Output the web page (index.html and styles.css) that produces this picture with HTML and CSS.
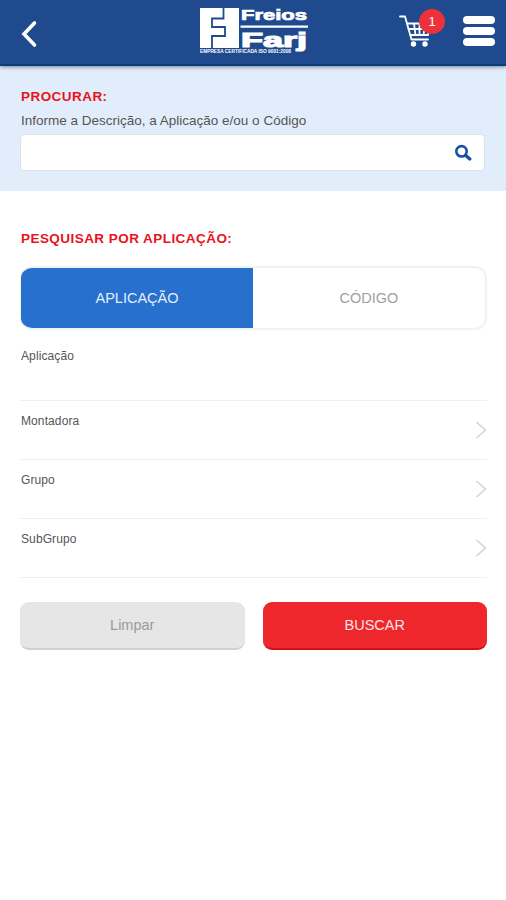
FILE: index.html
```html
<!DOCTYPE html>
<html lang="pt-BR">

<head>
    <meta charset="UTF-8">
    <meta name="viewport" content="width=device-width, initial-scale=1.0">
    <title>Freios Farj</title>
    <link rel="stylesheet" href="styles.css">
</head>

<body>
    <header class="topbar">
        <button class="icon-button back" aria-label="Voltar">
            <svg width="18" height="28" viewBox="0 0 18 28">
                <path d="M14.500 3 4 14l10.500 11" fill="none" stroke="#fff" stroke-width="3.600" stroke-linecap="round" />
            </svg>
        </button>

        <svg class="logo" width="112" height="50" viewBox="0 0 112 50">
            <path d="M2 3h39v40H2z" fill="#fff" />
            <path d="M25.500 3v10.500H14v8.500h13v9H14v12" fill="none" stroke="#1f4b8e" stroke-width="1.800" />
            <path d="M42.500 20.500H110v2.200H42.500z" fill="#fff" />
            <text class="logo-name" x="43" y="14.500" font-size="14.500" textLength="66" lengthAdjust="spacingAndGlyphs">Freios</text>
            <text class="logo-name logo-big" x="43" y="42" font-size="21" textLength="66" lengthAdjust="spacingAndGlyphs">Farj</text>
            <text class="logo-tag" x="2" y="48.200" font-size="4.500" textLength="91" lengthAdjust="spacingAndGlyphs">EMPRESA CERTIFICADA ISO 9001:2008</text>
        </svg>

        <div class="actions">
            <button class="icon-button cart" aria-label="Carrinho">
                <svg width="34" height="34" viewBox="0 0 34 34">
                    <g fill="none" stroke="#fff" stroke-width="1.800" stroke-linecap="round" stroke-linejoin="round">
                        <path d="M1 2.500h5L12.500 25.500H29" />
                        <path d="M8 9.500h24L29 21H11.500M9.500 15h21M15 9.500l1.500 11.500M20.500 9.500V21M26 9.500L24.500 21" />
                    </g>
                    <circle cx="14.500" cy="30" r="2.700" fill="#fff" />
                    <circle cx="26" cy="30" r="2.700" fill="#fff" />
                </svg>
                <span class="badge">1</span>
            </button>
            <button class="icon-button menu" aria-label="Menu">
                <span></span>
                <span></span>
                <span></span>
            </button>
        </div>
    </header>

    <section class="search">
        <h2 class="title">PROCURAR:</h2>
        <label class="search-label" for="search-input">Informe a Descrição, a Aplicação e/ou o Código</label>
        <div class="search-box">
            <input type="text" id="search-input">
            <svg width="18" height="18" viewBox="0 0 18 18">
                <circle cx="7.500" cy="7.300" r="5.200" fill="none" stroke="#15529f" stroke-width="2.600" />
                <path d="M11.500 11.300 15.800 15" stroke="#15529f" stroke-width="3.300" stroke-linecap="round" />
            </svg>
        </div>
    </section>

    <main class="filters">
        <h2 class="title">PESQUISAR POR APLICAÇÃO:</h2>
        <div class="tabs">
            <button class="tab active">APLICAÇÃO</button>
            <button class="tab">CÓDIGO</button>
        </div>

        <div class="field field-first"><span>Aplicação</span></div>
        <div class="field">
            <span>Montadora</span>
            <svg class="arrow" width="12" height="20" viewBox="0 0 12 20"><path d="M1.500 2 10.500 10l-9 8" /></svg>
        </div>
        <div class="field">
            <span>Grupo</span>
            <svg class="arrow" width="12" height="20" viewBox="0 0 12 20"><path d="M1.500 2 10.500 10l-9 8" /></svg>
        </div>
        <div class="field">
            <span>SubGrupo</span>
            <svg class="arrow" width="12" height="20" viewBox="0 0 12 20"><path d="M1.500 2 10.500 10l-9 8" /></svg>
        </div>

        <div class="buttons">
            <button class="btn btn-clear">Limpar</button>
            <button class="btn btn-search">BUSCAR</button>
        </div>
    </main>
</body>

</html>
```

FILE: styles.css
```css
* {
    box-sizing: border-box;
}

body {
    margin: 0;
    background-color: #fff;
    font-family: "Liberation Sans", Arial, sans-serif;
    color: #555;
}

button {
    padding: 0;
    border: none;
    background: none;
    font-family: inherit;
    cursor: pointer;
}

/* Topo */
.topbar {
    display: grid;
    grid-template-columns: 178px 112px 1fr;
    align-items: start;
    position: relative;
    height: 66px;
    padding: 0 11px 0 20px;
    background-color: #1f4b8e;
    border-bottom: 2px solid #083c80;
    box-shadow: 0 1px 4px rgba(0, 0, 0, 0.45);
}

.icon-button {
    display: block;
}

.icon-button svg {
    display: block;
}

.back {
    width: 18px;
    margin-top: 20px;
}

.logo {
    margin-top: 5px;
}

.logo-name {
    font-weight: bold;
    fill: #fff;
    stroke: #fff;
    stroke-width: 0.7px;
}

.logo-big {
    stroke-width: 1.2px;
}

.logo-tag {
    font-weight: bold;
    fill: #fff;
}

.actions {
    display: flex;
    justify-content: flex-end;
    gap: 30px;
}

.cart {
    position: relative;
    margin-top: 14px;
}

.badge {
    position: absolute;
    top: -5px;
    right: -12px;
    width: 26px;
    height: 25px;
    border-radius: 50%;
    background-color: #ee303a;
    color: #fff;
    font-size: 13px;
    line-height: 25px;
    text-align: center;
}

.menu {
    display: flex;
    flex-direction: column;
    gap: 3px;
    margin-top: 16px;
}

.menu span {
    width: 32px;
    height: 8px;
    border-radius: 4px;
    background-color: #fff;
}

/* Procurar */
.search {
    height: 125px;
    padding: 23px 21px 0 20px;
    background-color: #e2edfb;
}

.title {
    margin: 0 1px;
    color: #e9131d;
    font-size: 13.5px;
    line-height: 16px;
    letter-spacing: 0.45px;
}

.search-label {
    display: block;
    margin: 8px 1px 5px;
    font-size: 13.5px;
    line-height: 16px;
}

.search-box {
    display: flex;
    align-items: center;
    height: 37px;
    padding: 0 12px;
    border: 1px solid #dfe2e6;
    border-radius: 4px;
    background-color: #fff;
}

#search-input {
    flex: 1;
    border: none;
    outline: none;
    background: none;
    font-size: 14px;
}

/* Filtros */
.filters {
    padding: 40px 19px 0 20px;
}

.tabs {
    display: flex;
    height: 64px;
    margin-top: 19px;
    border: 2px solid #f2f2f2;
    border-left-width: 1px;
    border-radius: 12px;
    overflow: hidden;
}

.tab {
    flex: 1;
    color: #a0a0a0;
    font-size: 14.5px;
}

.tab.active {
    background-color: #2770cd;
    color: #e4efff;
}

.field {
    display: flex;
    justify-content: space-between;
    height: 59px;
    padding-top: 12px;
    border-bottom: 1px solid #f0f0f0;
    font-size: 12px;
    line-height: 16px;
    letter-spacing: 0.1px;
}

.field span {
    margin-left: 1px;
}

.field-first {
    height: 71px;
    padding-top: 18px;
}

.arrow {
    margin-top: 7px;
    fill: none;
    stroke: #d2d2d2;
    stroke-width: 1.5px;
}

.buttons {
    display: grid;
    grid-template-columns: 1fr 1fr;
    gap: 18px;
    margin-top: 24px;
}

.btn {
    height: 48px;
    border-radius: 9px;
    font-size: 14.5px;
}

.btn-clear {
    background-color: #e6e6e6;
    border-bottom: 2px solid #d0d0d0;
    color: #9a9a9a;
}

.btn-search {
    background-color: #ee272d;
    border-bottom: 2px solid #d40f17;
    color: #ffe3e4;
}
```
